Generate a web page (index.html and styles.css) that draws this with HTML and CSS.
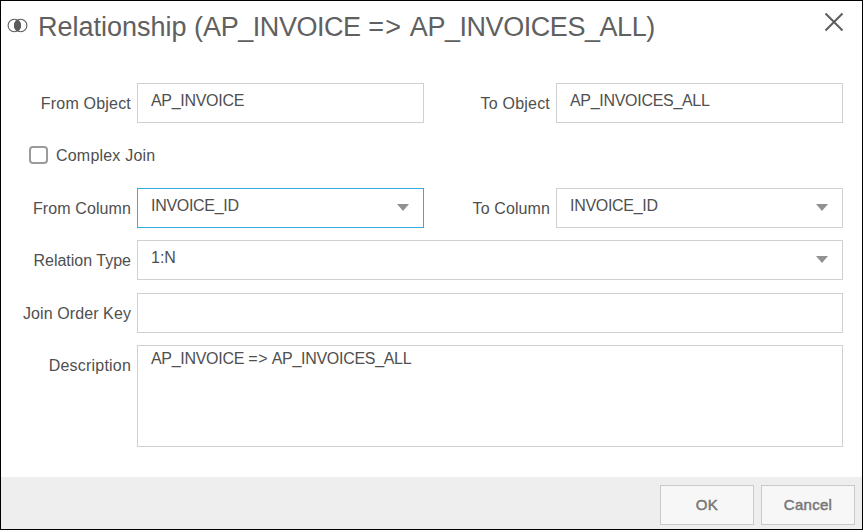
FILE: index.html
```html
<!DOCTYPE html>
<html lang="en">
<head>
<meta charset="utf-8">
<title>Relationship</title>
<link rel="stylesheet" href="styles.css">
</head>
<body>
<div class="dialog">
  <header class="header">
    <svg class="join-icon" width="21" height="15" viewBox="0 0 21 15"><path class="overlap" d="M10.5 2.2A6.2 6.2 0 0 1 10.5 12.8A6.2 6.2 0 0 1 10.5 2.2Z"/><circle cx="7.3" cy="7.5" r="6.2"/><circle cx="13.7" cy="7.5" r="6.2"/></svg>
    <h1 class="title">Relationship (<span class="name">AP_INVOICE</span> <span class="maps">=&gt;</span> <span class="name">AP_INVOICES_ALL</span>)</h1>
    <svg class="close" width="20" height="20" viewBox="0 0 20 20"><path d="M1.5 1.5L18.5 18.5M18.5 1.5L1.5 18.5"/></svg>
  </header>
  <main class="form">
    <div class="row">
      <span class="label loose">From Object</span><div class="field">AP_INVOICE</div>
      <span class="label loose">To Object</span><div class="field">AP_INVOICES_ALL</div>
    </div>
    <label class="check"><span class="box"></span><span class="loose">Complex Join</span></label>
    <div class="row">
      <span class="label">From Column</span><div class="field select focused"><span>INVOICE_ID</span><i class="arrow"></i></div>
      <span class="label">To Column</span><div class="field select"><span>INVOICE_ID</span><i class="arrow"></i></div>
    </div>
    <div class="row type-row">
      <span class="label even">Relation Type</span><div class="field select wide"><span class="even">1:N</span><i class="arrow"></i></div>
    </div>
    <div class="row key-row">
      <span class="label">Join Order Key</span><div class="field wide"></div>
    </div>
    <div class="row">
      <span class="label loose">Description</span><div class="field wide area">AP_INVOICE <span class="arrow-text">=&gt;</span> AP_INVOICES_ALL</div>
    </div>
  </main>
  <footer class="footer"><div class="button">OK</div><div class="button">Cancel</div></footer>
</div>
</body>
</html>
```

FILE: styles.css
```css
* { box-sizing: border-box; }
body { margin: 0; font: 16px/20px "Liberation Sans", Arial, sans-serif; color: #4f4f4f; background: #fff; }
.dialog { width: 863px; height: 530px; border: 1px solid #000; display: flex; flex-direction: column; background: #fff; }
.header { height: 82px; flex: none; display: flex; align-items: flex-start; padding: 11px 18px 0 6px; }
.join-icon { margin: 6px 10px 0 0; fill: none; stroke: #5c5c5c; stroke-width: 1.1; }
.join-icon .overlap { fill: #5c5c5c; }
.title { margin: 0; font-size: 27px; line-height: 30px; font-weight: 400; color: #606060; white-space: nowrap; }
.name { letter-spacing: -0.45px; }
.maps { letter-spacing: 1.3px; }
.close { margin-left: auto; fill: none; stroke: #5c5c5c; stroke-width: 2; }
.form { flex: 1; display: flex; flex-direction: column; }
.row { display: grid; grid-template-columns: 124px 6px 287px 126px 6px 287px; align-items: start; padding-left: 6px; }
.row .field:nth-child(2) { grid-column: 3; }
.row .label:nth-child(3) { grid-column: 4; }
.row .field:nth-child(4) { grid-column: 6; }
.row .field.wide { grid-column: 3 / 7; }
.label { padding-top: 11px; text-align: right; white-space: nowrap; letter-spacing: 0.1px; }
.loose { letter-spacing: 0.2px; }
.label.even, .even { letter-spacing: 0; }
.field { height: 40px; border: 1px solid #d0d0d0; padding: 7px 13px; white-space: nowrap; letter-spacing: -0.3px; }
.select { display: flex; justify-content: space-between; }
.field.focused { border-color: #36abe0; }
.arrow { border: 6px solid transparent; border-top: 7px solid #919191; border-bottom: 0; margin: 8px 1px 0 0; height: 0; }
.arrow-text { letter-spacing: 0.8px; }
.check { height: 65px; display: flex; align-items: flex-start; padding: 23px 0 0 28px; gap: 8px; }
.box { width: 19px; height: 18px; border: 2px solid #9b9b9b; border-radius: 4px; }
.type-row { margin: 12px 0 13px; }
.key-row { margin-bottom: 12px; }
.area { height: 102px; padding-top: 3px; }
.footer { height: 52px; background: #eee; display: flex; justify-content: flex-end; gap: 7px; padding: 8px 7px 4px; }
.button { width: 94px; height: 40px; border: 1px solid #c9c9c9; background: #f7f7f7; text-align: center; font-size: 15px; line-height: 38px; letter-spacing: 0.3px; color: #777; -webkit-text-stroke: 0.5px #777; }
```
